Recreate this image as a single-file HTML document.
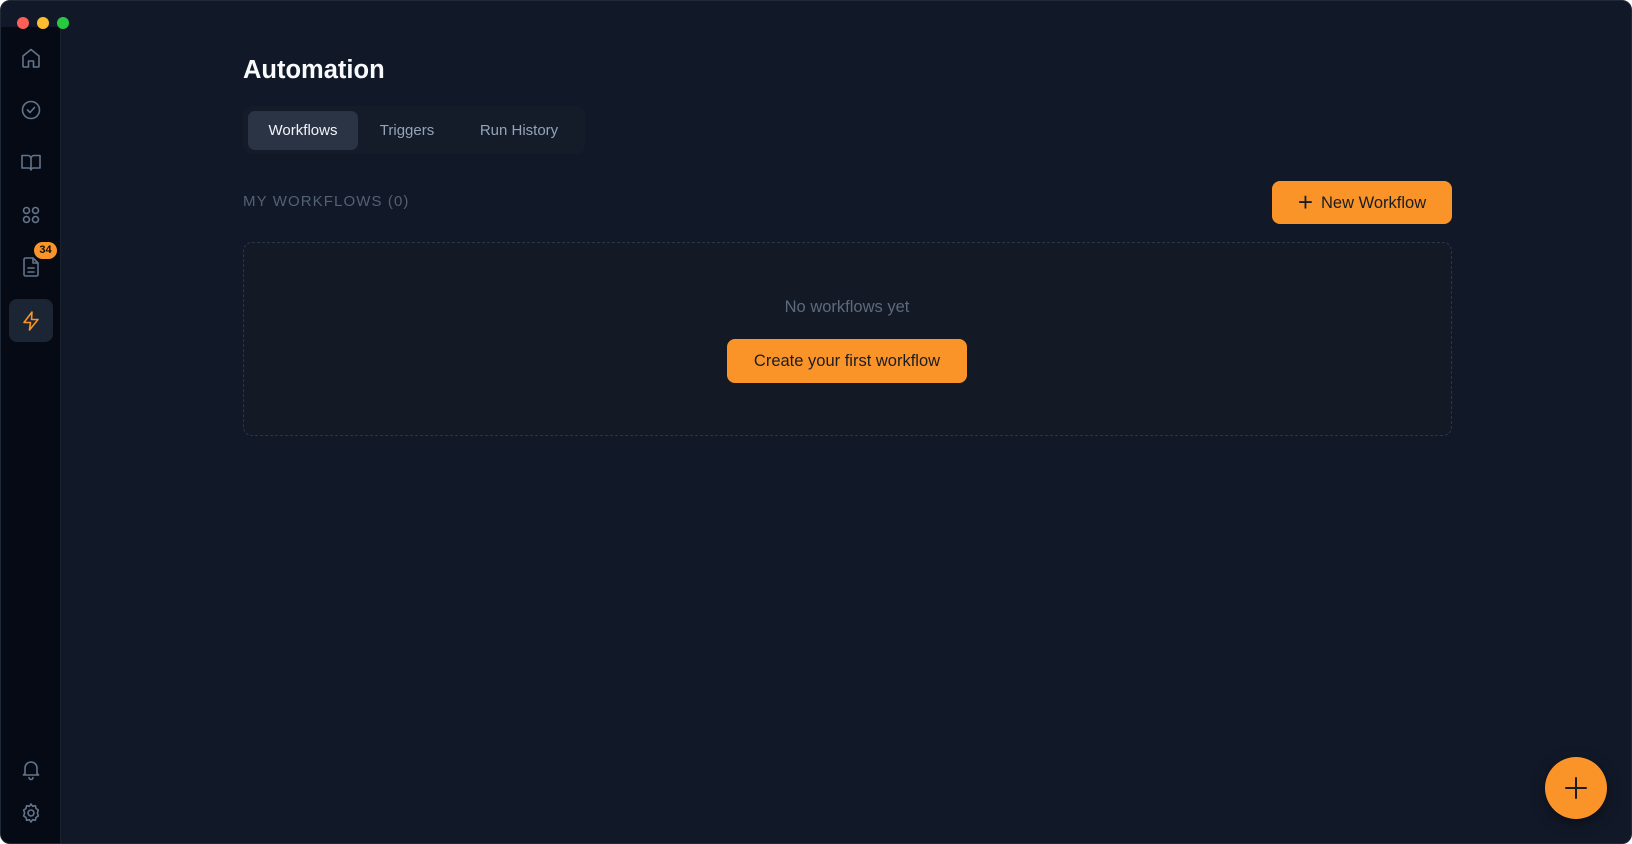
<!DOCTYPE html>
<html><head><meta charset="utf-8"><style>
*{box-sizing:border-box;margin:0;padding:0}
html,body{width:1632px;height:844px;background:#fff;overflow:hidden;font-family:"Liberation Sans",sans-serif}
.win{position:absolute;left:0;top:0;width:1632px;height:844px;background:#111827;border-radius:10px;overflow:hidden;border:1px solid #1f2937}
.side{position:absolute;left:0;top:26px;width:60px;bottom:0;background:#050a14;border-right:1px solid #1a2230}
.tl{position:absolute;top:16px;width:12px;height:12px;border-radius:50%}
.ic{position:absolute;left:18px;width:24px;height:24px}
.ic svg{width:24px;height:24px;fill:none;stroke:#64748b;stroke-width:1.6;stroke-linecap:round;stroke-linejoin:round}
h1{position:absolute;left:242px;top:55px;font-size:25.5px;font-weight:bold;color:#f8fafc}
.tabs{position:absolute;left:242px;top:105px;width:342px;height:48px;background:#151c29;border-radius:9px}
.tab{position:absolute;top:5px;height:39px;line-height:39px;font-size:15.5px;color:#94a3b8;text-align:center}
.btn{position:absolute;background:#fb9428;border-radius:8px;color:#1a1d24;font-size:17px;text-align:center}
</style></head><body><div class="win">
<div class="side">
<div class="ic" style="top:19px"><svg viewBox="0 0 24 24"><path d="M4 10l8-6.5 8 6.5v10a1 1 0 0 1-1 1h-4.5v-6h-5v6H5a1 1 0 0 1-1-1z"/></svg></div>
<div class="ic" style="top:71px"><svg viewBox="0 0 24 24"><circle cx="12" cy="12" r="8.5"/><path d="M8.5 12l2.5 2.5 4.5-5"/></svg></div>
<div class="ic" style="top:123px"><svg viewBox="0 0 24 24"><path d="M3 5.5h6a3 3 0 0 1 3 3V20a2.5 2.5 0 0 0-2.5-2H3zM21 5.5h-6a3 3 0 0 0-3 3V20a2.5 2.5 0 0 1 2.5-2H21z"/></svg></div>
<div class="ic" style="top:176px"><svg viewBox="0 0 24 24"><circle cx="7.5" cy="7.5" r="3"/><circle cx="16.5" cy="7.5" r="3"/><circle cx="7.5" cy="16.5" r="3"/><circle cx="16.5" cy="16.5" r="3"/></svg></div>
<div class="ic" style="top:228px"><svg viewBox="0 0 24 24"><path d="M14 3H6.5a1.5 1.5 0 0 0-1.5 1.5v15A1.5 1.5 0 0 0 6.5 21h11a1.5 1.5 0 0 0 1.5-1.5V8zM14 3v5h5M9 13h6M9 17h6"/></svg></div>
<div style="position:absolute;left:33px;top:215px;width:23px;height:17px;border-radius:9px;background:#fb9428;color:#111;font-size:11px;font-weight:bold;text-align:center;line-height:17px">34</div>
<div style="position:absolute;left:8px;top:272px;width:44px;height:43px;border-radius:8px;background:#1c2533"></div>
<div class="ic" style="top:282px"><svg viewBox="0 0 24 24" style="stroke:#fb9428"><path d="M13 3L5 13.5h6.5L10.5 21 19 10.5h-6.5z"/></svg></div>
<div class="ic" style="top:730px"><svg viewBox="0 0 24 24"><path d="M6 16.5V11a6 6 0 0 1 12 0v5.5l1.5 1.5h-15zM10 20.5a2 2 0 0 0 4 0"/></svg></div>
<div class="ic" style="top:774px"><svg viewBox="0 0 24 24"><circle cx="12" cy="12" r="3"/><path d="M12 3l1.6 2.3 2.8-.6.6 2.8L19.3 9l-.9 3 .9 3-2.3 1.5-.6 2.8-2.8-.6L12 21l-1.6-2.3-2.8.6-.6-2.8L4.7 15l.9-3-.9-3 2.3-1.5.6-2.8 2.8.6z"/></svg></div>
</div>
<div class="tl" style="left:16px;background:#fe5f57"></div>
<div class="tl" style="left:36px;background:#febc2e"></div>
<div class="tl" style="left:56px;background:#28c840"></div>
<h1>Automation</h1>
<div class="tabs">
<div class="tab" style="left:5px;width:110px;background:#2a3445;border-radius:7px;color:#f1f5f9;font-size:15px">Workflows</div>
<div class="tab" style="left:117px;width:94px;font-size:15px">Triggers</div>
<div class="tab" style="left:211px;width:130px;font-size:15px">Run History</div>
</div>
<div style="position:absolute;left:242px;top:192px;font-size:15px;letter-spacing:1.1px;color:#536175">MY WORKFLOWS (0)</div>
<div class="btn" style="left:1271px;top:180px;width:180px;height:43px;line-height:43px;font-size:16.5px"><span style="font-size:26px;font-weight:300;vertical-align:-3px;margin-right:8px">+</span>New Workflow</div>
<div style="position:absolute;left:242px;top:241px;width:1209px;height:194px;background:#131a26;border:1px dashed #2a3646;border-radius:9px"></div>
<div style="position:absolute;left:646px;top:297px;width:400px;text-align:center;font-size:16.5px;color:#5c6a7e">No workflows yet</div>
<div class="btn" style="left:726px;top:338px;width:240px;height:44px;line-height:44px;font-size:16.5px">Create your first workflow</div>
<div style="position:absolute;left:1544px;top:756px;width:62px;height:62px;border-radius:50%;background:#fb9428;box-shadow:0 4px 14px rgba(0,0,0,.4)">
<svg width="62" height="62" viewBox="0 0 62 62"><path d="M31 21v20M21 31h20" stroke="#1a1d24" stroke-width="2" stroke-linecap="round"/></svg></div>
</div></body></html>
